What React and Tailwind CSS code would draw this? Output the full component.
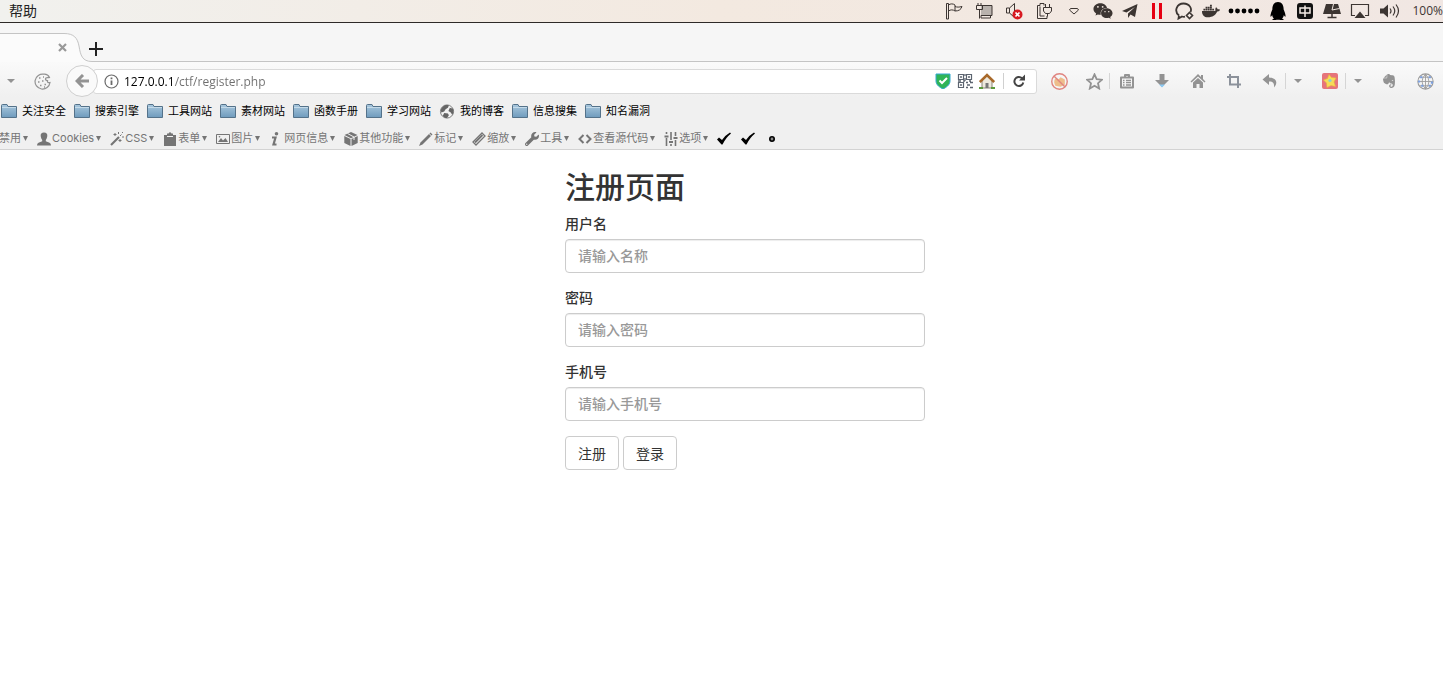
import { FaWeixin, FaDocker, FaQq, FaPaperPlane, FaEvernote, FaWrench } from 'react-icons/fa'

const Caret = ({ className = 'w-[5px] h-[5px]' }) => (
  <svg className={`shrink-0 ${className}`} viewBox="0 0 8 5" preserveAspectRatio="none" fill="currentColor">
    <path d="M0 0h8L4 5z" />
  </svg>
)

const Icon = ({ className = 'w-4 h-4', box = '0 0 16 16', children }) => (
  <svg className={`shrink-0 ${className}`} viewBox={box} fill="none" stroke="currentColor" strokeWidth={1}>
    {children}
  </svg>
)

const statusLeft = [
  {
    name: 'Flag',
    icon: (
      <Icon className="w-[18px] h-[18px]" box="0 0 18 18">
        <path d="M1.500 1.500H3.500V17H1.500zM3.500 3c2-1.500 4.500-1.500 6.500 0v6c-2-1.500-4.500-1.500-6.500 0M10 4.500c2 .8 4 .8 7 0-1 3-3 4.500-7 4.500" />
      </Icon>
    )
  },
  {
    name: 'Display',
    icon: (
      <Icon className="w-[18px] h-[18px]" box="0 0 18 18">
        <path d="M6 3.500h11v10H6" fill="#b9b2ad" />
        <path d="M6 13.500v2.500h9.500v-2.500M3 1v3M6 1v3M1.500 3.500h6v4h-6zM4.500 7.500v9" />
      </Icon>
    )
  },
  {
    name: 'Muted',
    icon: (
      <Icon className="w-[18px] h-[18px]" box="0 0 18 18">
        <path d="M1.500 6h3l5-4.500v14l-5-4.500h-3zM4.500 6v5" />
        <circle cx="12.500" cy="12.500" r="5" fill="#d71920" stroke="none" />
        <path d="M10.500 10.500l4 4M14.500 10.500l-4 4" stroke="#fff" strokeWidth={1.6} />
      </Icon>
    )
  },
  {
    name: 'Power',
    icon: (
      <Icon className="w-[18px] h-[18px]" box="0 0 18 18">
        <path d="M9 3.500V1.500H5v2H2.500v13H12V14M5 4.500v9.500h4.500" />
        <path d="M10.500 2v4M14.500 2v4M8.500 5.500h8v3.500l-2 2.500h-4l-2-2.500zM12.500 11.500v3" />
      </Icon>
    )
  },
  {
    name: 'More',
    icon: (
      <Icon className="w-3 h-3" box="0 0 12 12">
        <path d="M2.500 3.500h7l1 1.500L6 9 1.500 5z" />
      </Icon>
    )
  }
]

const statusApps = [
  { name: 'WeChat', icon: <FaWeixin className="w-5 h-5" /> },
  {
    name: 'Telegram',
    icon: (
      <Icon>
        <path d="M15.500 1L13 14l-4.500-2.500L6 15V10.500L13 4 4.500 9.500 0 8z" fill="currentColor" stroke="none" />
      </Icon>
    )
  },
  {
    name: 'Pause',
    icon: (
      <Icon className="w-3 h-4" box="0 0 12 16">
        <path d="M2.500 0v16M9.500 0v16" stroke="#e60012" strokeWidth={3} />
      </Icon>
    )
  },
  {
    name: 'Chat',
    icon: (
      <Icon className="w-5 h-[18px]" box="0 0 20 18">
        <path d="M5 13.500C-.5 9 3 1.500 9.500 1.500S18 7 16.500 10M5 13.500l-.5 3 3.500-2c1 .3 2 .4 3 .2" strokeWidth={1.8} />
        <path d="M15.500 10.500l3 3-3 3-3-3z" strokeWidth={1.6} />
      </Icon>
    )
  },
  { name: 'Docker', icon: <FaDocker className="w-[18px] h-[18px]" /> }
]

const statusTools = [
  { name: 'QQ', icon: <FaQq className="w-4 h-[18px] text-black" /> },
  {
    name: 'Input method',
    icon: (
      <Icon>
        <rect width="16" height="16" rx="3" fill="#111" stroke="none" />
        <path d="M3 5h10v5H3zM8 2.500v11.500" stroke="#f3eae5" strokeWidth={1.5} />
      </Icon>
    )
  },
  {
    name: 'Monitor',
    icon: (
      <Icon className="w-5 h-4" box="0 0 20 16">
        <path d="M4 1h12l3 10H1z" fill="currentColor" stroke="none" />
        <path d="M11.500 1l-1.500 6 7.500-1.500" stroke="#efe5df" />
        <path d="M10 11v3M5.500 14.500h9" strokeWidth={1.5} />
      </Icon>
    )
  }
]

const statusRight = [
  {
    name: 'AirPlay',
    icon: (
      <Icon className="w-5 h-4" box="0 0 20 16">
        <path d="M5 12.500H1.500v-11h17v11H15" strokeWidth={1.2} />
        <path d="M10 8.500l5.500 6.500h-11z" fill="currentColor" stroke="none" />
      </Icon>
    )
  },
  {
    name: 'Volume',
    icon: (
      <Icon className="w-[22px] h-4" box="0 0 22 16">
        <path d="M1 5.500h3.500L9 1.500v13l-4.500-4H1z" fill="currentColor" stroke="none" />
        <path d="M11 5.500q2 2.500 0 5M14 3.500q3.500 4.500 0 9M17 1.500q5 6.500 0 13" strokeWidth={1.2} />
      </Icon>
    )
  }
]

const StatusGroup = ({ items, cell }) => (
  <div className="flex items-center">
    {items.map((item) => (
      <button key={item.name} aria-label={item.name} className={`flex shrink-0 items-center justify-center ${cell}`}>
        {item.icon}
      </button>
    ))}
  </div>
)

const MenuBar = () => (
  <header className="flex h-[23px] items-center justify-between border-b border-[#2e2a28] bg-linear-to-r from-[#f1f1ee] via-[#f3e9e0] to-[#f1e7e3] text-[#3c3532]">
    <button className="pb-[2px] pl-[9px] text-[14px] text-[#222]">帮助</button>
    <div className="flex items-center">
      <StatusGroup items={statusLeft} cell="w-[30px]" />
      <StatusGroup items={statusApps} cell="w-[27px]" />
      <button aria-label="Dots" className="flex w-10 shrink-0 justify-center">
        <svg className="h-[6px] w-8" viewBox="0 0 32 6" fill="#000">
          {[3, 9.5, 16, 22.5, 29].map((x) => (
            <circle key={x} cx={x} cy="3" r="2.400" />
          ))}
        </svg>
      </button>
      <StatusGroup items={statusTools} cell="w-[27px]" />
      <StatusGroup items={statusRight} cell="w-[30px]" />
      <span className="ml-[7px] shrink-0 font-['Open_Sans',sans-serif] text-[12px] leading-4">100%</span>
    </div>
  </header>
)

const TabStrip = () => (
  <div className="flex h-[39px] items-end bg-[#f6f6f6]">
    <div className="grid h-[29px] w-[92px] shrink-0 items-center">
      <svg className="col-start-1 row-start-1 h-[29px] w-[92px]" viewBox="0 0 92 29">
        <path d="M0 .5H64C74 .5 77.500 5 79 13C80.500 22 82 28.500 92 28.500V29H0z" fill="#fbfbfb" />
        <path d="M0 .5H64C74 .5 77.500 5 79 13C80.500 22 82 28.500 92 28.500" fill="none" stroke="#c4c4c4" />
      </svg>
      <button aria-label="Close tab" className="col-start-1 row-start-1 ml-[58px] w-[9px] text-[#999]">
        <svg className="h-[9px] w-[9px]" viewBox="0 0 9 9" stroke="currentColor" strokeWidth={2.2}>
          <path d="M1 1l7 7M8 1L1 8" />
        </svg>
      </button>
    </div>
    <div className="flex h-[29px] flex-1 items-center border-b border-[#c4c4c4] pt-[3px]">
      <button aria-label="New tab" className="-ml-[3px] text-[#222]">
        <svg className="h-[14px] w-[14px]" viewBox="0 0 14 14" stroke="currentColor" strokeWidth={2}>
          <path d="M7 0v14M0 7h14" />
        </svg>
      </button>
    </div>
  </div>
)

const Tool = ({ name, cell = 'w-9', children }) => (
  <button aria-label={name} className={`flex h-4 shrink-0 items-center justify-center ${cell}`}>
    {children}
  </button>
)

const NavBar = () => (
  <div className="flex h-[38px] items-center text-[#939393]">
    <Tool name="History" cell="w-[21px]">
      <Caret className="h-1 w-2" />
    </Tool>
    <Tool name="Cookies" cell="w-[45px] pr-[2px]">
      <Icon className="h-[17px] w-[17px]" box="0 0 17 17">
        <path d="M10 1.200A7.500 7.500 0 1 0 16 9.500c-2 .5-3-.5-2.500-2-2 0-2.500-1.500-1.500-2.500 1-.8 2.500 0 3.500-.5C14.500 2.500 12.500 1 10 1.200z" strokeWidth={1.2} />
        <path d="M5 5h1.500M9 4h1M4 9h1.500M8 8h1.500M6 12.500h1.500M10.500 11.500H12M10 14h1" strokeWidth={1.5} />
      </Icon>
    </Tool>
    <button aria-label="Back" className="z-10 -mr-[5px] flex h-8 w-8 shrink-0 items-center justify-center rounded-full border border-[#cfcfcf] bg-[#fafafa]">
      <svg className="h-[14px] w-[14px]" viewBox="0 0 14 14" fill="none" stroke="currentColor" strokeWidth={3}>
        <path d="M8 1L2 7l6 6M2 7h12" />
      </svg>
    </button>
    <div className="flex h-[25px] flex-1 items-center rounded-[3px] border border-[#dadada] bg-white pl-[10px]">
      <Icon className="h-[15px] w-[15px] text-[#6b6b6b]" box="0 0 15 15">
        <circle cx="7.500" cy="7.500" r="6.500" strokeWidth={1.2} />
        <path d="M7.500 6.500V11M7.500 3.500v1.800" strokeWidth={1.8} />
      </Icon>
      <input
        aria-label="Address"
        defaultValue="127.0.0.1/ctf/register.php"
        className="ml-[5px] min-w-0 flex-1 bg-[linear-gradient(to_right,#000_51px,#6e6e6e_51px)] bg-clip-text pt-px font-['Open_Sans',sans-serif] text-[12px] text-transparent outline-none"
      />
      <div className="flex items-center gap-[6px] pr-[10px]">
        <button aria-label="Secure">
          <Icon>
            <path d="M1 1h14v7c0 4-4 6.500-7 8-3-1.500-7-4-7-8z" fill="#2fb457" stroke="#35a8d0" />
            <path d="M4.500 7.500L7 10l5-5" stroke="#fff" strokeWidth={2} />
          </Icon>
        </button>
        <button aria-label="QR code">
          <Icon className="h-4 w-4 text-[#5c6470]">
            <path d="M1.500 1.500h5v5h-5zM9.500 1.500h5v5h-5zM1.500 9.500h5v5h-5z" strokeWidth={1.2} />
            <path d="M3 4h2M11 4h2M3 12h2M9 9.500h2M13 9.500h3M10 12h3M9 14.500h2M13 14.500h3M8 1v2M8 5v3M1 8h3M6 8h2M12 8h2" strokeWidth={1.3} />
          </Icon>
        </button>
        <button aria-label="Home page">
          <Icon>
            <path d="M3 8l5-5 5 5v7H3z" fill="#eee9dd" stroke="#8a8478" />
            <path d="M6.500 10h3v5h-3z" fill="#777" stroke="none" />
            <path d="M.8 9L8 2l7.200 7" stroke="#a8692a" strokeWidth={2.6} />
            <path d="M0 15h4M12 15h4" stroke="#5c9a3c" strokeWidth={2} />
          </Icon>
        </button>
        <span className="ml-[2px] h-4 border-l border-[#d0d0d0]" />
        <button aria-label="Reload" className="ml-[2px] text-[#444]">
          <svg className="h-[14px] w-[14px]" viewBox="0 0 14 14">
            <path d="M10 4.200A4.500 4.500 0 1 0 11.300 8.500" fill="none" stroke="currentColor" strokeWidth={2} />
            <path d="M13 .5v6H7z" fill="currentColor" />
          </svg>
        </button>
      </div>
    </div>
    <div className="ml-1 flex items-center">
      <Tool name="Block">
        <Icon className="h-[17px] w-[17px]">
          <path d="M3 9c0-4 2-5 4-3l2-2 4 2v5l-4 2-5-1z" fill="#eebd8b" stroke="none" />
          <circle cx="8" cy="8" r="7.300" stroke="#e08580" strokeWidth={1.3} />
          <path d="M3 3l10 10" stroke="#e08580" strokeWidth={1.3} />
        </Icon>
      </Tool>
      <Tool name="Bookmark" cell="w-[33px] border-r border-[#d5d5d5] pl-[2px]">
        <Icon className="h-[17px] w-[17px]">
          <path d="M8 1.300l2 4.500 5 .5-3.700 3.300 1.100 5L8 12l-4.400 2.600 1.100-5L1 6.300l5-.5z" strokeWidth={1.7} />
        </Icon>
      </Tool>
      <Tool name="Library" cell="w-[33px]">
        <Icon>
          <path d="M2 4.500h12v10H2zM6 4V2h4v2" strokeWidth={2} strokeLinejoin="round" />
          <path d="M4 7.500h1.500M7 7.500h5M4 9.700h1.500M7 9.700h5M4 12h1.500M7 12h5" strokeWidth={1.3} />
        </Icon>
      </Tool>
      <Tool name="Downloads" cell="w-9 pl-[2px]">
        <Icon>
          <path d="M5.500 1h5v6H15l-7 7-7-7h4.500z" fill="currentColor" stroke="none" />
          <path d="M5 11.500h6L8 14.500z" fill="#8ccbf5" stroke="none" />
        </Icon>
      </Tool>
      <Tool name="Home" cell="w-9 pl-[2px]">
        <Icon>
          <path d="M8 1L.5 8.500l1 1L8 3.500l6.500 6 1-1-2.500-2.500V2h-2v2z" fill="currentColor" stroke="none" />
          <path d="M8 5l5 4.500V15H9.500v-4h-3v4H3V9.500z" fill="currentColor" stroke="none" />
        </Icon>
      </Tool>
      <Tool name="Crop" cell="w-9 pl-[2px]">
        <Icon className="h-4 w-4 text-[#8c929b]">
          <path d="M4 1v10.500h11M1 4h11v11" strokeWidth={2} />
        </Icon>
      </Tool>
      <Tool name="Undo" cell="w-[35px] border-r border-[#d5d5d5] pl-1">
        <Icon>
          <path d="M7 1L.5 6.500 7 12V8.500c4 0 5.500 1.500 5 6 4-4.500 3-9.500-5-10z" fill="currentColor" stroke="none" />
        </Icon>
      </Tool>
      <Tool name="Undo list" cell="w-6">
        <Caret className="h-1 w-2" />
      </Tool>
      <Tool name="Favourites" cell="w-9 border-r border-[#d5d5d5] pl-1">
        <Icon>
          <rect width="16" height="16" rx="2" fill="#e6747b" stroke="none" />
          <path d="M7 1.500l2.500 3 4.500.5-2 4 1.500 4.500-4.500-1-4 2-.5-4.500L1.500 7l4-1.500z" fill="#f6dc58" stroke="#eab63d" strokeWidth={0.6} />
          <circle cx="8" cy="7.500" r="1.600" fill="#8ecfd0" stroke="none" />
        </Icon>
      </Tool>
      <Tool name="Favourites list" cell="w-6">
        <Caret className="h-1 w-2" />
      </Tool>
      <Tool name="Evernote" cell="w-[38px]">
        <FaEvernote className="h-4 w-4" />
      </Tool>
      <Tool name="Proxy" cell="w-[35px]">
        <Icon className="h-[17px] w-[17px]">
          <circle cx="8" cy="8" r="7.200" stroke="#999" />
          <path d="M8 1v14M1 8h14M2.500 4h11M2.500 12h11M8 1Q1.500 8 8 15M8 1q6.500 7 0 14" stroke="#999" strokeWidth={0.8} />
          <path d="M3 4h2M11 4h2M1 8h2M13 9h2M4 12h2M11 12h2" stroke="#7a9fe0" strokeWidth={2} />
        </Icon>
      </Tool>
    </div>
  </div>
)

const bookmarks = ['关注安全', '搜索引擎', '工具网站', '素材网站', '函数手册', '学习网站', '我的博客', '信息搜集', '知名漏洞']

const FolderIcon = () => (
  <svg className="h-[14px] w-4 shrink-0" viewBox="0 0 16 14">
    <defs>
      <linearGradient id="folder" x1="0" y1="0" x2="0" y2="1">
        <stop offset="0" stopColor="#a9c8de" />
        <stop offset="1" stopColor="#6f9bbd" />
      </linearGradient>
    </defs>
    <path d="M.5 13.500v-12q0-1 1-1H6l1 2h8.500v11z" fill="url(#folder)" stroke="#54728a" />
    <path d="M1 3.500h14" stroke="#c4dae9" />
  </svg>
)

const GlobeIcon = () => (
  <svg className="h-[15px] w-4 shrink-0" viewBox="0 0 16 16">
    <circle cx="8" cy="8" r="7" fill="#f2f2f2" stroke="#777" />
    <path d="M3 3.500C5 1 8 .8 10 1.500L9 4 6.500 5.500 5 8 2 9C.8 7 1.500 5 3 3.500zM11 4l3.500 1c.8 3 .3 5-1 6.500L12 9 9.500 7.500zM5 9.500l4 .5 1 2-2 3c-2 0-3.500-1-4.500-2.500z" fill="#666" />
  </svg>
)

const BookmarksBar = () => (
  <nav className="flex h-[22px] items-center gap-2 pl-px text-[11px] text-black">
    {bookmarks.map((label) => (
      <a key={label} href="#" className="flex shrink-0 items-center gap-[5px]">
        {label === '我的博客' ? <GlobeIcon /> : <FolderIcon />}
        {label}
      </a>
    ))}
  </nav>
)

const small = 'w-[14px] h-[14px]'

const devTools = [
  {
    label: 'Cookies',
    icon: (
      <Icon className={small} box="0 0 14 14">
        <path d="M7 .5c2.500 0 3.500 1.500 3.300 3.500-.2 2-1 3-1.500 4v1.200l3.700 1.500q1.500.6 1.500 2.800H0q0-2.200 1.500-2.800l3.700-1.500V8c-.5-1-1.300-2-1.500-4C3.500 2 4.500.5 7 .5z" fill="currentColor" stroke="none" />
      </Icon>
    )
  },
  {
    label: 'CSS',
    icon: (
      <Icon className={small} box="0 0 14 14">
        <path d="M1 13l8-8" strokeWidth={2.2} />
        <path d="M10 4l1.500-1.500M5 1v3M3.500 2.500h3M10 7v3M8.500 8.500h3M8.500 0v2M12 5h2M12 1l1-1" />
      </Icon>
    )
  },
  {
    label: '表单',
    icon: (
      <Icon className={small} box="0 0 14 14">
        <path d="M1 3h3V1.500h1.500Q7-1 8.500 1.500H10V3h3v11H1z" fill="currentColor" stroke="none" />
        <path d="M4 4.500h6" stroke="#f1f1f1" />
      </Icon>
    )
  },
  {
    label: '图片',
    icon: (
      <Icon className={small} box="0 0 14 14">
        <path d="M.5 2.500h13v9H.5z" />
        <path d="M2 10l3-4 2 2.500L9.500 6l2.500 4z" fill="currentColor" stroke="none" />
        <circle cx="3.500" cy="4.800" r=".8" fill="currentColor" stroke="none" />
      </Icon>
    )
  },
  {
    label: '网页信息',
    icon: (
      <Icon className={small} box="0 0 14 14">
        <circle cx="7.500" cy="1.800" r="1.800" fill="currentColor" stroke="none" />
        <path d="M3 5.500h3.500L4.500 12.500H7.500" strokeWidth={2.2} />
      </Icon>
    )
  },
  {
    label: '其他功能',
    icon: (
      <Icon className={small} box="0 0 14 14">
        <path d="M7 0l6.500 3L7 6.200.5 3zM.3 4L6.500 7v7L.3 11zM13.700 4L7.500 7v7l6.200-3z" fill="currentColor" stroke="none" />
        <path d="M3.500 1.500L10 5v3" stroke="#f1f1f1" />
      </Icon>
    )
  },
  {
    label: '标记',
    icon: (
      <Icon className={small} box="0 0 14 14">
        <path d="M0 14l1.500-3.500L10 2 12 4 3.500 12.500z" fill="currentColor" stroke="none" />
        <path d="M11 1L13 3" strokeWidth={1.5} />
      </Icon>
    )
  },
  {
    label: '缩放',
    icon: (
      <Icon className={small} box="0 0 14 14">
        <path d="M1 10L10 1l3 3-9 9z" strokeWidth={1.3} />
        <path d="M3 10.500l7.500-7.500" strokeWidth={1.8} />
      </Icon>
    )
  },
  { label: '工具', icon: <FaWrench className="h-[14px] w-[14px]" /> },
  {
    label: '查看源代码',
    icon: (
      <Icon className={small} box="0 0 14 14">
        <path d="M5.500 3L1.500 7l4 4M8.500 3l4 4-4 4" strokeWidth={2} />
      </Icon>
    )
  },
  {
    label: '选项',
    icon: (
      <Icon className={small} box="0 0 14 14">
        <path d="M2.500 0v2M2.500 6v8M7 0v8M7 12v2M11.500 0v4M11.500 8v6" strokeWidth={1.6} />
        <path d="M.5 4.500h4M5 10h4M9.500 6h4" strokeWidth={1.8} />
      </Icon>
    )
  }
]

const Check = () => (
  <svg className="h-[13px] w-[14px]" viewBox="0 0 14 13" fill="#000">
    <path d="M0 7.500L2 5.500 5 8Q8.500 3 13 .5L14 1.500Q9 5.500 5.500 12.500H4.500z" />
  </svg>
)

const DevToolbar = () => (
  <div className="mt-1 flex h-6 items-center gap-[9px] border-b border-[#d3d3d3] pt-[2px] text-[11px] text-[#757575]">
    <button className="-ml-px flex shrink-0 items-center gap-[2px]">
      禁用
      <Caret />
    </button>
    {devTools.map((tool) => (
      <button key={tool.label} className="flex shrink-0 items-center gap-[2px]">
        <span className="flex items-center gap-px">
          {tool.icon}
          {tool.label}
        </span>
        <Caret />
      </button>
    ))}
    <div className="flex items-center gap-[10px]">
      <button aria-label="Standards mode"><Check /></button>
      <button aria-label="CSS valid"><Check /></button>
      <button aria-label="Script status" className="flex w-[14px] justify-center">
        <svg className="h-[6px] w-[6px]" viewBox="0 0 6 6">
          <circle cx="3" cy="3" r="2.200" fill="#888" stroke="#000" strokeWidth={1.6} />
        </svg>
      </button>
    </div>
  </div>
)

const fields = [
  { id: 'username', label: '用户名', type: 'text', placeholder: '请输入名称' },
  { id: 'password', label: '密码', type: 'password', placeholder: '请输入密码' },
  { id: 'phone', label: '手机号', type: 'text', placeholder: '请输入手机号' }
]

const RegisterForm = () => (
  <main className="flex justify-center pt-5 pl-[47px] text-[14px] text-[#333]">
    <form className="w-[360px]" onSubmit={(e) => e.preventDefault()}>
      <h1 className="mb-[10px] text-[30px] leading-[34px] font-medium">注册页面</h1>
      {fields.map((field) => (
        <div key={field.id} className="mb-[15px]">
          <label htmlFor={field.id} className="mb-[5px] block leading-5 font-medium">
            {field.label}
          </label>
          <input
            id={field.id}
            type={field.type}
            placeholder={field.placeholder}
            className="block h-[34px] w-full rounded border border-[#ccc] bg-white px-3 pb-[2px] font-medium shadow-[inset_0_1px_1px_rgba(0,0,0,0.075)] placeholder:text-[#999]"
          />
        </div>
      ))}
      <div className="flex gap-1">
        {['注册', '登录'].map((text) => (
          <button key={text} className="h-[34px] rounded border border-[#ccc] bg-white px-3">
            {text}
          </button>
        ))}
      </div>
    </form>
  </main>
)

const App = () => {
  return (
    <div className="min-h-screen overflow-x-hidden bg-white font-['Inter','Noto_Sans_CJK_SC',sans-serif]">
      <MenuBar />
      <TabStrip />
      <div className="bg-linear-to-b from-[#fafafa] to-[#f0f0f0] to-40%">
        <NavBar />
        <BookmarksBar />
        <DevToolbar />
      </div>
      <RegisterForm />
    </div>
  )
}

export default App
